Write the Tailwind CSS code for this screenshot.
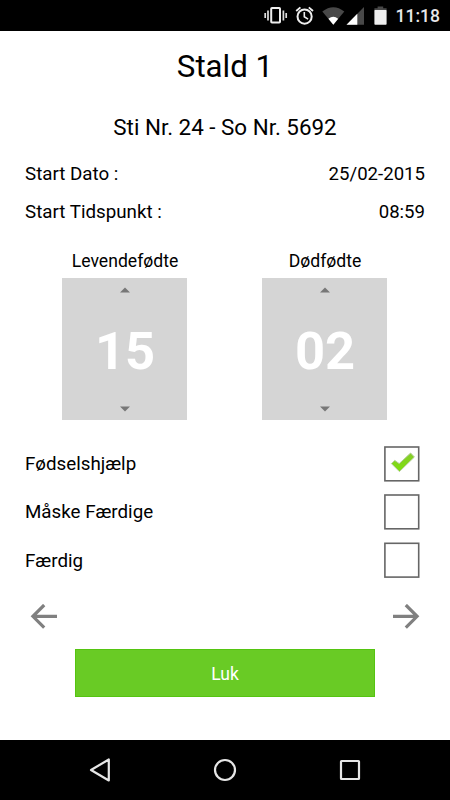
<!DOCTYPE html>
<html lang="da">
  <head>
    <meta charset="UTF-8" />
    <title>Stald 1</title>
    <script src="https://cdn.jsdelivr.net/npm/@tailwindcss/browser@4"></script>
  </head>
  <body class="bg-white">
    <div class="w-[450px] h-[800px] flex flex-col overflow-hidden font-['Roboto',sans-serif] text-black">
      <!-- Status bar -->
      <header class="h-[31px] shrink-0 bg-black flex items-start justify-end">
        <svg class="shrink-0" width="130" height="31" viewBox="262 0 130 31" fill="none">
          <!-- vibrate -->
          <rect x="271.2" y="8" width="8.8" height="14.6" rx="0.8" stroke="#eee" stroke-width="2" />
          <path d="M268 10.5v10M283.4 10.5v10M265.2 13v5M286.2 13v5" stroke="#ddd" stroke-width="1.7" />
          <!-- alarm -->
          <circle cx="304.6" cy="16.6" r="7.1" stroke="#eee" stroke-width="2" />
          <path d="M304.3 12v4.8l3.8 2.3" stroke="#eee" stroke-width="1.6" />
          <path d="M296.2 11l4.2-3.6M313 11l-4.2-3.6" stroke="#eee" stroke-width="1.9" />
          <!-- wifi -->
          <path d="M322.3 11.5Q333.3 2.8 344.3 11.5L333.3 24.7Z" fill="#484848" />
          <path d="M328.4 18.8Q333.3 14.8 338.2 18.8L333.3 24.7Z" fill="#fff" />
          <!-- signal -->
          <path d="M364 7v17.7h-17.5Z" fill="#484848" />
          <path d="M357.3 13.8v10.9h-10.8Z" fill="#fff" />
          <!-- battery -->
          <path d="M374.4 8.2h3.2v-1.8h5.6v1.8h3.4v3h-12.2Z" fill="#484848" />
          <rect x="374.4" y="10" width="12.2" height="14.8" rx="0.8" fill="#eee" />
        </svg>
        <span class="w-[58px] pl-[3.5px] text-[17.5px] leading-[33px] font-medium text-[#e8e8e8] whitespace-nowrap">11:18</span>
      </header>

      <main class="flex-1 flex flex-col">
        <h1 class="mt-4 text-center text-[31.25px] leading-[40px]">Stald 1</h1>
        <h2 class="mt-[26px] text-center text-[22.4px] leading-7">Sti Nr. 24 - So Nr. 5692</h2>

        <div class="mt-[14px] px-[25px] text-[18.75px] leading-[38px]">
          <div class="flex justify-between"><span>Start Dato :</span><span class="text-[18.6px]">25/02-2015</span></div>
          <div class="flex justify-between"><span>Start Tidspunkt :</span><span class="text-[18.6px]">08:59</span></div>
        </div>

        <!-- Counters -->
        <div class="mt-[18px] px-[25px] grid grid-cols-2">
          <div class="flex flex-col items-center">
            <span class="text-[17.6px] leading-6">Levendefødte</span>
            <div class="mt-[5px] mr-px w-[125px] h-[142px] bg-[#d5d5d5] flex flex-col items-center justify-between pt-[9px] pb-[8px]">
              <svg class="ml-px" width="10" height="6" viewBox="0 0 10 6"><path d="M0 5.5L5 0.5L10 5.5Z" fill="#777" /></svg>
              <span class="ml-px text-[52.5px] leading-[56px] font-bold text-white relative top-px">15</span>
              <svg class="ml-px" width="10" height="6" viewBox="0 0 10 6"><path d="M0 0.5L5 5.5L10 0.5Z" fill="#777" /></svg>
            </div>
          </div>
          <div class="flex flex-col items-center">
            <span class="text-[17.6px] leading-6">Dødfødte</span>
            <div class="mt-[5px] mr-px w-[125px] h-[142px] bg-[#d5d5d5] flex flex-col items-center justify-between pt-[9px] pb-[8px]">
              <svg class="ml-px" width="10" height="6" viewBox="0 0 10 6"><path d="M0 5.5L5 0.5L10 5.5Z" fill="#777" /></svg>
              <span class="ml-px text-[52.5px] leading-[56px] font-bold text-white relative top-px">02</span>
              <svg class="ml-px" width="10" height="6" viewBox="0 0 10 6"><path d="M0 0.5L5 5.5L10 0.5Z" fill="#777" /></svg>
            </div>
          </div>
        </div>

        <!-- Checkboxes -->
        <div class="mt-[19.5px] pl-[25px] pr-[30px] text-[18.75px]">
          <div class="h-[48.3px] flex items-center justify-between">
            <span>Fødselshjælp</span>
            <svg width="36" height="36" viewBox="0 0 36 36" fill="none">
              <defs>
                <linearGradient id="tick" x1="0" y1="0" x2="0" y2="1">
                  <stop offset="0" stop-color="#86cc2a" />
                  <stop offset="1" stop-color="#7ee00c" />
                </linearGradient>
              </defs>
              <rect x="0.9" y="1" width="33.8" height="33.8" stroke="#666" stroke-width="1.6" />
              <path d="M7.4 17.6L10.8 14.4L15.2 17.6L26.6 7L30.4 11L15.4 25.6Z" fill="url(#tick)" stroke="#b5cf9a" stroke-width="1" stroke-linejoin="round" />
            </svg>
          </div>
          <div class="h-[48.3px] flex items-center justify-between">
            <span>Måske Færdige</span>
            <svg width="36" height="36" viewBox="0 0 36 36" fill="none"><rect x="0.9" y="1" width="33.8" height="33.8" stroke="#666" stroke-width="1.6" /></svg>
          </div>
          <div class="h-[48.3px] flex items-center justify-between">
            <span class="pt-px">Færdig</span>
            <svg width="36" height="36" viewBox="0 0 36 36" fill="none"><rect x="0.9" y="1.3" width="33.8" height="33.8" stroke="#666" stroke-width="1.6" /></svg>
          </div>
        </div>

        <!-- Previous / next -->
        <div class="mt-[19.6px] px-[30px] flex justify-between">
          <svg width="28" height="26" viewBox="0 0 28 26" fill="none" stroke="#808080" stroke-width="3.2"><path d="M27 12.3H3M14.2 1L2.9 12.3L14.2 23.6" /></svg>
          <svg width="28" height="26" viewBox="0 0 28 26" fill="none" stroke="#808080" stroke-width="3.2"><path d="M1 12.3H25M13.8 1L25.1 12.3L13.8 23.6" /></svg>
        </div>

        <button class="mt-[19px] mx-[75px] h-[48px] bg-[#69cb25] border border-[#55c411] text-white text-[17.5px] leading-none pt-[3px]">Luk</button>
      </main>

      <!-- Navigation bar -->
      <nav class="h-[60px] shrink-0 bg-black px-[87px] flex items-center justify-between">
        <svg width="26" height="26" viewBox="0 0 26 26" fill="none" stroke="#e6e6e6" stroke-width="2.2" stroke-linejoin="round"><path d="M21.8 2.5V23.5L4 13Z" /></svg>
        <svg width="26" height="26" viewBox="0 0 26 26" fill="none" stroke="#e6e6e6" stroke-width="2.2"><circle cx="13" cy="13" r="10" /></svg>
        <svg width="26" height="26" viewBox="0 0 26 26" fill="none" stroke="#e6e6e6" stroke-width="2.2"><rect x="4" y="4" width="18" height="18" rx="0.5" /></svg>
      </nav>
    </div>
  </body>
</html>
